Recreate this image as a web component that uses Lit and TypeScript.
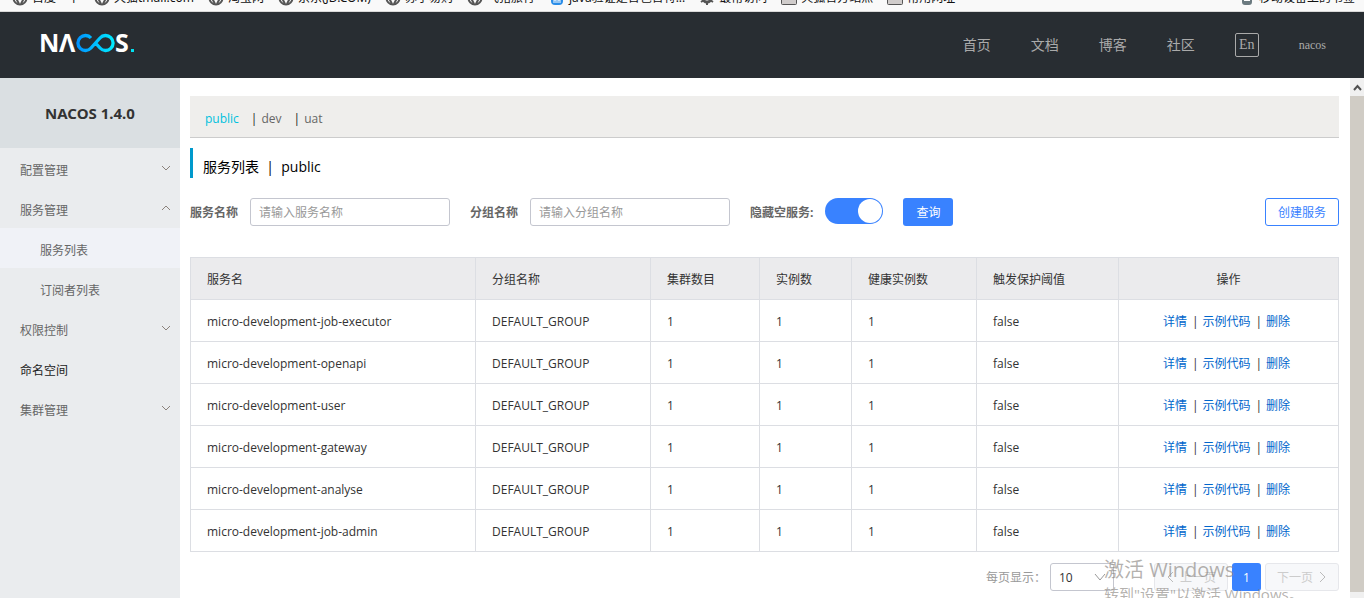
import { LitElement, html, css, svg } from "lit";
import { customElement, property } from "lit/decorators.js";

const globe = html`<svg class="ico" viewBox="0 0 16 16" fill="none" stroke="#555" stroke-width="2">
  <circle cx="8" cy="8" r="6.5" /><path d="M2 6h12M5 6v4l2 4M11 6v4l-2 4" />
</svg>`;
const paw = html`<svg class="ico" viewBox="0 0 16 16"><rect x="2" width="12" height="15" rx="4" fill="#2a8de8" />
  <path d="M5 13v-3h2v3M9 13v-3h2v3" fill="none" stroke="#fff" /></svg>`;
const gear = html`<svg class="ico" viewBox="0 0 16 16" stroke="#555" stroke-width="3" fill="none">
  <circle cx="8" cy="8" r="4" /><path d="M8 0v4M8 12v3M2 4l3 2M11 10l3 2M2 12l3-2M11 6l3-2" stroke-width="2" />
</svg>`;
const folder = html`<svg class="ico" viewBox="0 0 16 16"><rect x="0.5" y="3" width="15" height="11.5" rx="1" fill="#d0cccb" stroke="#555" /></svg>`;
const phone = html`<svg class="ico" viewBox="0 0 16 16"><rect x="4" y="1" width="8" height="13" rx="2" fill="#fff" stroke="#6b7a80" stroke-width="2" />
  <path d="M4 11h8v3H4z" fill="#6b7a80" /></svg>`;

@customElement("bookmark-bar")
export class BookmarkBar extends LitElement {
  static styles = css`
    :host { display: block; flex: none; font-family: "Noto Sans", "Noto Sans CJK SC", sans-serif; }
    .bar {
      display: flex; align-items: flex-end; height: 11px; overflow: hidden;
      background: #f9f9f9; border-bottom: 1px solid #d8d8d8;
      padding: 0 9px 0 12px; font-size: 12px; color: #111;
    }
    .list { display: flex; flex: 1; gap: 14px; }
    .mark {
      display: flex; align-items: center; gap: 4px; height: 16px; line-height: 16px; margin-bottom: 5px;
      color: inherit; text-decoration: none; white-space: nowrap;
    }
    .ico { width: 16px; height: 16px; flex: none; }
  `;
  render() {
    const marks: [unknown, string][] = [
      [globe, "百度一下"], [globe, "天猫tmall.com"], [globe, "淘宝网"], [globe, "京东(JD.COM)"],
      [globe, "苏宁易购"], [globe, "飞猪旅行"], [paw, "java验证是否包含特..."], [gear, "最常访问"],
      [folder, "火狐官方站点"], [folder, "常用网址"],
    ];
    return html`<nav class="bar">
      <div class="list">${marks.map(([i, t]) => html`<a class="mark" href="#">${i}${t}</a>`)}</div>
      <a class="mark" href="#">${phone}移动设备上的书签</a>
    </nav>`;
  }
}

@customElement("top-header")
export class TopHeader extends LitElement {
  static styles = css`
    :host { display: block; flex: none; }
    .head {
      display: flex; align-items: center; justify-content: space-between;
      height: 66px; background: #282d32; padding: 0 38px 0 40px; box-sizing: border-box;
    }
    .logo { display: block; width: 96px; height: 24px; }
    .word { font: 700 25px "Open Sans", sans-serif; fill: #fff; }
    .nav { display: flex; align-items: center; gap: 40px; }
    .link { color: #aaa; font-size: 14px; line-height: 20px; text-decoration: none; }
    .lang {
      width: 24px; height: 24px; padding: 0; background: none; border: 1px solid #aaa; border-radius: 2px;
      color: #aaa; font: 14px/20px "Liberation Serif", serif;
    }
    .user { font: 12px/20px "Liberation Serif", serif; color: #aaa; }
  `;
  render() {
    return html`<header class="head">
      <a href="#" aria-label="Nacos"><svg class="logo" viewBox="0 0 96 24">
        <defs><linearGradient id="g" gradientUnits="userSpaceOnUse" x1="36" y1="0" x2="76" y2="0">
          <stop offset="0" stop-color="#0090ff" /><stop offset="1" stop-color="#00f0ff" />
        </linearGradient></defs>
        <text class="word" x="-1" y="19">N</text>
        <text class="word" x="19" y="19">Λ</text>
        <path d="M51 5A7.500 7.500 0 1 0 51 15L60 5A7.500 7.500 0 1 1 60 15L55.500 10" fill="none" stroke="url(#g)" stroke-width="3.300" />
        <text class="word" x="75" y="19">S</text>
        <rect x="91" y="16" width="3" height="3" fill="#00e0f0" />
      </svg></a>
      <nav class="nav">
        ${["首页", "文档", "博客", "社区"].map((t) => html`<a class="link" href="#">${t}</a>`)}
        <button class="lang">En</button>
        <span class="user">nacos</span>
      </nav>
    </header>`;
  }
}

@customElement("side-menu")
export class SideMenu extends LitElement {
  static styles = css`
    :host { display: block; flex: none; width: 180px; background: #eaecee; }
    .title {
      margin: 0; height: 70px; line-height: 70px; text-align: center; background: #dadfe2;
      font-size: 15px; font-weight: 700; font-family: "Noto Sans", sans-serif; color: #333;
    }
    .list { list-style: none; margin: 0; padding: 0; }
    .item {
      display: flex; align-items: center; justify-content: space-between; height: 40px; padding: 4px 10px 0 20px;
      box-sizing: border-box; font-size: 12px; color: #666; text-decoration: none;
    }
    .sub { padding-left: 40px; }
    .on { background: #f0f2f7; }
    .dark { color: #222; }
    .arrow { width: 8px; height: 8px; margin-bottom: 4px; fill: none; stroke: #8b827c; }
  `;
  render() {
    const arrow = (up: boolean) => html`<svg class="arrow" viewBox="0 0 8 8">${up ? svg`<path d="M0 6l4-4 4 4" />` : svg`<path d="M0 2l4 4 4-4" />`}</svg>`;
    const items = [
      { t: "配置管理", a: arrow(false), c: "" }, { t: "服务管理", a: arrow(true), c: "" },
      { t: "服务列表", a: "", c: "sub on" }, { t: "订阅者列表", a: "", c: "sub" },
      { t: "权限控制", a: arrow(false), c: "" }, { t: "命名空间", a: "", c: "dark" },
      { t: "集群管理", a: arrow(false), c: "" },
    ];
    return html`<h1 class="title">NACOS 1.4.0</h1>
      <ul class="list">${items.map((i) => html`<li><a class="item ${i.c}" href="#">${i.t}${i.a}</a></li>`)}</ul>`;
  }
}

@customElement("service-list")
export class ServiceList extends LitElement {
  @property({ type: Array }) services = ["job-executor", "openapi", "user", "gateway", "analyse", "job-admin"];

  static styles = css`
    :host { display: block; flex: 1; min-width: 0; padding: 18px 11px 0 10px; font-size: 12px; color: #333; overflow: hidden; }
    button, input, select { font: inherit; box-sizing: border-box; height: 28px; margin: 0; }
    .spaces {
      display: flex; align-items: center; height: 38px; padding: 3px 15px 0;
      background: #efeeec; border-bottom: 1px solid #ccc;
    }
    .space { color: #666; text-decoration: none; }
    .space.on { color: #00c1de; }
    .bar { margin: 0 4px 0 12px; color: #222; }
    .title {
      margin: 10px 0 20px; border-left: 3px solid #09c; padding: 8px 0 0 10px;
      font-size: 14px; font-weight: 400; line-height: 22px; color: #000; white-space: pre;
    }
    .filters { display: flex; align-items: center; margin-bottom: 31px; }
    .label { color: #666; font-weight: 700; margin-right: 12px; white-space: nowrap; }
    .text { width: 200px; margin-right: 20px; padding: 0 8px; border: 1px solid #c4c6cf; border-radius: 3px; background: #fff; }
    .text::placeholder { color: #999; opacity: 1; }
    .switch {
      appearance: none; display: flex; justify-content: flex-end; width: 58px; height: 26px; margin: 0 20px 2px 0;
      padding: 1px; border-radius: 13px; background: #3982ff;
    }
    .switch::before { content: ""; width: 24px; height: 24px; border-radius: 50%; background: #fff; }
    .primary { width: 50px; padding: 0; border: 0; border-radius: 3px; background: #3982ff; color: #fff; }
    .create { margin-left: auto; width: 74px; padding: 0; border: 1px solid #3982ff; border-radius: 3px; background: #fff; color: #3982ff; }
    .table {
      width: 100%; table-layout: fixed; border-collapse: separate; border-spacing: 0;
      border-top: 1px solid #dcdee3; border-left: 1px solid #dcdee3;
    }
    .table th, .table td {
      height: 42px; box-sizing: border-box; padding: 2px 16px 0; text-align: left; font-weight: 400; line-height: 20px;
      border-right: 1px solid #dcdee3; border-bottom: 1px solid #dcdee3;
    }
    .table th { background: #ebebed; }
    .table .ops { text-align: center; }
    .table td.ops { padding-right: 20px; }
    .link { color: #06c; text-decoration: none; }
    .sep { margin: 0 4px 0 5px; }
    .w1 { width: 285px; } .w2 { width: 175px; } .w3 { width: 109px; } .w4 { width: 92px; }
    .w5 { width: 125px; } .w6 { width: 142px; } .w7 { width: 220px; }
    .pager { display: flex; align-items: center; justify-content: flex-end; gap: 4px; margin-top: 11px; }
    .size { color: #999; }
    .pick { display: grid; align-items: center; width: 64px; margin-right: 36px; }
    .select { grid-area: 1 / 1; width: 64px; appearance: none; padding: 0 8px; border: 1px solid #c4c6cf; border-radius: 3px; background: #fff; color: #333; }
    .down { grid-area: 1 / 1; justify-self: end; width: 12px; height: 12px; margin-right: 8px; fill: none; stroke: #999; pointer-events: none; }
    .step {
      display: flex; align-items: center; justify-content: center; gap: 5px; width: 74px; padding: 0;
      border: 1px solid #e6e7eb; border-radius: 3px; background: #f7f8fa; color: #ccc;
    }
    .chev { width: 9px; height: 12px; fill: none; stroke: #bbb; }
    .page { width: 29px; padding: 0; border: 0; border-radius: 3px; background: #3982ff; color: #fff; }
  `;
  render() {
    const heads = ["服务名", "分组名称", "集群数目", "实例数", "健康实例数", "触发保护阈值", "操作"];
    return html`
      <nav class="spaces"><a class="space on" href="#">public</a><span class="bar">|</span><a class="space" href="#">dev</a><span class="bar">|</span><a class="space" href="#">uat</a></nav>
      <h2 class="title">${"服务列表  |  public"}</h2>
      <form class="filters">
        <label class="label" for="name">服务名称</label><input class="text" id="name" placeholder="请输入服务名称" />
        <label class="label" for="group">分组名称</label><input class="text" id="group" placeholder="请输入分组名称" />
        <label class="label" for="hide">隐藏空服务:</label><input class="switch" id="hide" type="checkbox" role="switch" checked />
        <button class="primary" type="button">查询</button>
        <button class="create" type="button">创建服务</button>
      </form>
      <table class="table">
        <colgroup>${heads.map((_, i) => html`<col class="w${i + 1}" />`)}</colgroup>
        <thead><tr>${heads.map((h, i) => html`<th class=${i === 6 ? "ops" : ""}>${h}</th>`)}</tr></thead>
        <tbody>${this.services.map((s) => html`<tr>
          <td>micro-development-${s}</td><td>DEFAULT_GROUP</td><td>1</td><td>1</td><td>1</td><td>false</td>
          <td class="ops"><a class="link" href="#">详情</a><span class="sep">|</span><a class="link" href="#">示例代码</a><span class="sep">|</span><a class="link" href="#">删除</a></td>
        </tr>`)}</tbody>
      </table>
      <div class="pager">
        <label class="size" for="size">每页显示：</label>
        <span class="pick"><select class="select" id="size"><option>10</option><option>20</option><option>50</option></select>
          <svg class="down" viewBox="0 0 12 12"><path d="M1 3l5 6 5-6" /></svg></span>
        <button class="step" disabled><svg class="chev" viewBox="0 0 9 12"><path d="M7 1L2 6l5 5" /></svg>上一页</button>
        <button class="page">1</button>
        <button class="step" disabled>下一页<svg class="chev" viewBox="0 0 9 12"><path d="M2 1l5 5-5 5" /></svg></button>
      </div>`;
  }
}

@customElement("app-root")
export class AppRoot extends LitElement {
  static styles = css`
    :host {
      display: flex; flex-direction: column; height: 100vh; overflow: hidden; position: relative; background: #fff;
      font-family: "Open Sans", "Noto Sans CJK SC", sans-serif;
    }
    .body { display: flex; flex: 1; min-height: 0; }
    .scroll { display: flex; flex-direction: column; width: 14px; background: #f0f0f0; flex: none; }
    .up { display: block; width: 14px; height: 18px; fill: none; stroke: #505050; stroke-width: 2; }
    .thumb { flex: 1; margin-bottom: 6px; background: #d0ccc5; }
    .mark { position: absolute; right: 66px; bottom: -6px; width: 194px; color: rgba(130, 125, 120, 0.6); pointer-events: none; white-space: nowrap; }
    .big { margin: 0; font-size: 20px; line-height: 28px; }
    .small { margin: 0; font-size: 15px; line-height: 20px; }
  `;
  render() {
    return html`
      <bookmark-bar></bookmark-bar>
      <top-header></top-header>
      <div class="body">
        <side-menu></side-menu>
        <service-list></service-list>
        <div class="scroll"><svg class="up" viewBox="0 0 14 18"><path d="M4 12l3.500-4 3.500 4" /></svg><div class="thumb"></div></div>
      </div>
      <div class="mark"><p class="big">激活 Windows</p><p class="small">转到"设置"以激活 Windows。</p></div>`;
  }
}
